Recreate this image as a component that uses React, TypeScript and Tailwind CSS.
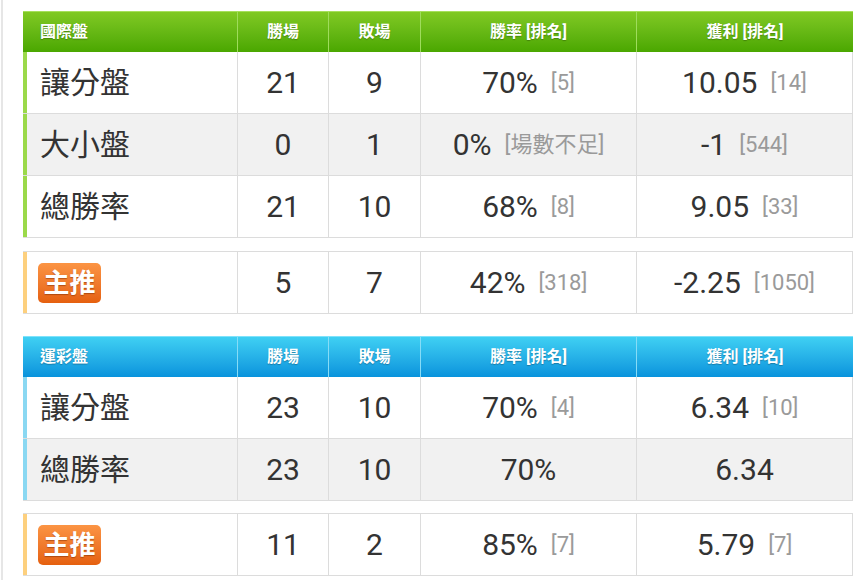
import React from "react";

type Row = { label: string; w: string; l: string; rate: string; rateRank?: string; profit: string; profitRank?: string; gray?: boolean };

const cjk = { fontFamily: 'Roboto, "Noto Sans CJK TC", sans-serif' };

function Cell({ main, rank }: { main: string; rank?: string }) {
  return (
    <div className="flex items-center justify-center border-r border-[#dcdcdc] h-full">
      <span className="text-[30px] text-[#333]">{main}</span>
      {rank && <span className="text-[22px] text-[#9a9a9a] ml-[13px]">{rank}</span>}
    </div>
  );
}

function BodyRow({ r, accent, badge }: { r: Row; accent: string; badge?: boolean }) {
  return (
    <div className={`grid grid-cols-[215px_91px_92px_216px_216px] h-[62px] border-b border-[#dcdcdc] ${r.gray ? "bg-[#f1f1f1]" : "bg-white"}`}>
      <div className={`flex items-center border-l-[4px] ${accent} border-r border-[#dcdcdc] ${badge ? "pl-[11px]" : "pl-[13px]"}`}>
        {badge ? (
          <span className="inline-flex items-center justify-center w-[63px] h-[40px] rounded-[5px] bg-gradient-to-b from-[#fb9443] to-[#e5600e] text-white text-[26px] font-bold leading-none [text-shadow:0_1px_1px_rgba(120,40,0,0.5)]">主推</span>
        ) : (
          <span className="text-[30px] text-[#333]">{r.label}</span>
        )}
      </div>
      <Cell main={r.w} />
      <Cell main={r.l} />
      <Cell main={r.rate} rank={r.rateRank} />
      <Cell main={r.profit} rank={r.profitRank} />
    </div>
  );
}

function Header({ title, blue }: { title: string; blue?: boolean }) {
  const bg = blue
    ? "bg-gradient-to-b from-[#3fd0f3] to-[#0793dc] border-t border-[#7fe2fb]"
    : "bg-gradient-to-b from-[#80c923] to-[#4aa700] border-t border-[#a6e05c]";
  const sep = blue ? "border-[#86dcf7]" : "border-[#9fdc5c]";
  return (
    <div className={`grid grid-cols-[215px_91px_92px_216px_216px] h-[41px] text-white text-[16px] font-bold ${bg} [text-shadow:0_1px_1px_rgba(0,0,0,0.25)]`}>
      <div className={`flex items-center pl-[17px] border-r ${sep}`}>{title}</div>
      <div className={`flex items-center justify-center border-r ${sep}`}>勝場</div>
      <div className={`flex items-center justify-center border-r ${sep}`}>敗場</div>
      <div className={`flex items-center justify-center border-r ${sep}`}>勝率 [排名]</div>
      <div className="flex items-center justify-center">獲利 [排名]</div>
    </div>
  );
}

export default function App() {
  const t1: Row[] = [
    { label: "讓分盤", w: "21", l: "9", rate: "70%", rateRank: "[5]", profit: "10.05", profitRank: "[14]" },
    { label: "大小盤", w: "0", l: "1", rate: "0%", rateRank: "[場數不足]", profit: "-1", profitRank: "[544]", gray: true },
    { label: "總勝率", w: "21", l: "10", rate: "68%", rateRank: "[8]", profit: "9.05", profitRank: "[33]" },
  ];
  const p1: Row = { label: "", w: "5", l: "7", rate: "42%", rateRank: "[318]", profit: "-2.25", profitRank: "[1050]" };
  const t2: Row[] = [
    { label: "讓分盤", w: "23", l: "10", rate: "70%", rateRank: "[4]", profit: "6.34", profitRank: "[10]" },
    { label: "總勝率", w: "23", l: "10", rate: "70%", profit: "6.34", gray: true },
  ];
  const p2: Row = { label: "", w: "11", l: "2", rate: "85%", rateRank: "[7]", profit: "5.79", profitRank: "[7]" };

  return (
    <div className="w-[867px] h-[580px] bg-white overflow-hidden" style={cjk}>
      <div className="ml-[1px] h-full border-l-2 border-[#e6e6e6] pl-[20px] pt-[11px]">
        <div className="w-[830px]">
          <Header title="國際盤" />
          {t1.map((r) => (
            <BodyRow key={r.label} r={r} accent="border-l-[#9bd94a]" />
          ))}
          <div className="h-[13px]" />
          <div className="border-t border-[#dcdcdc]">
            <BodyRow r={p1} accent="border-l-[#fdd07e]" badge />
          </div>
          <div className="h-[22px]" />
          <Header title="運彩盤" blue />
          {t2.map((r) => (
            <BodyRow key={r.label} r={r} accent="border-l-[#8ad8f2]" />
          ))}
          <div className="h-[12px]" />
          <div className="border-t border-[#dcdcdc]">
            <BodyRow r={p2} accent="border-l-[#fdd07e]" badge />
          </div>
        </div>
      </div>
    </div>
  );
}
